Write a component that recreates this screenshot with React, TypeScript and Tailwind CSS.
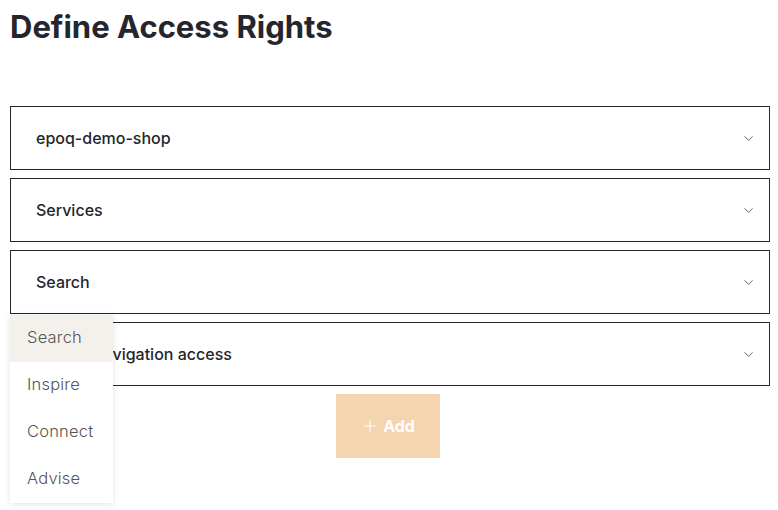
import { ChevronDown, Plus } from "lucide-react"

const rows = ["epoq-demo-shop", "Services", "Search", "Search navigation access"]
const options = ["Search", "Inspire", "Connect", "Advise"]

export default function App() {
    return (
        <div className="relative min-h-[510px] bg-white pl-[10px] pr-[8px] pt-[8px] font-['Inter',sans-serif] text-[#25262d]">
            <h1 className="text-[31px] leading-[37px] font-bold">Define Access Rights</h1>

            <div className="mt-[61px] flex flex-col gap-[8px]">
                {rows.map((r) => (
                    <div
                        key={r}
                        className="flex h-[64px] items-center justify-between border border-[#25262d] pl-[25px] pr-[13px]"
                    >
                        <span className="text-[16px] font-medium">{r}</span>
                        <ChevronDown size={15} strokeWidth={1.4} className="text-[#555]" />
                    </div>
                ))}
            </div>

            <div className="mt-[8px] flex justify-center pr-[4px]">
                <button className="flex h-[64px] w-[104px] items-center justify-center gap-[4px] bg-[#f5d4b0] text-[16px] font-bold text-white">
                    <Plus size={18} strokeWidth={1.4} />
                    Add
                </button>
            </div>

            <div className="absolute left-[10px] top-[315px] w-[103px] bg-white shadow-[0_1px_6px_rgba(0,0,0,0.12)]">
                {options.map((o, i) => (
                    <div
                        key={o}
                        className={`flex h-[47px] items-center pb-[2px] pl-[17px] text-[16.5px] font-light tracking-[0.2px] text-[#555] ${i === 0 ? "bg-[#f4f1ed]" : ""}`}
                    >
                        {o}
                    </div>
                ))}
            </div>
        </div>
    )
}
